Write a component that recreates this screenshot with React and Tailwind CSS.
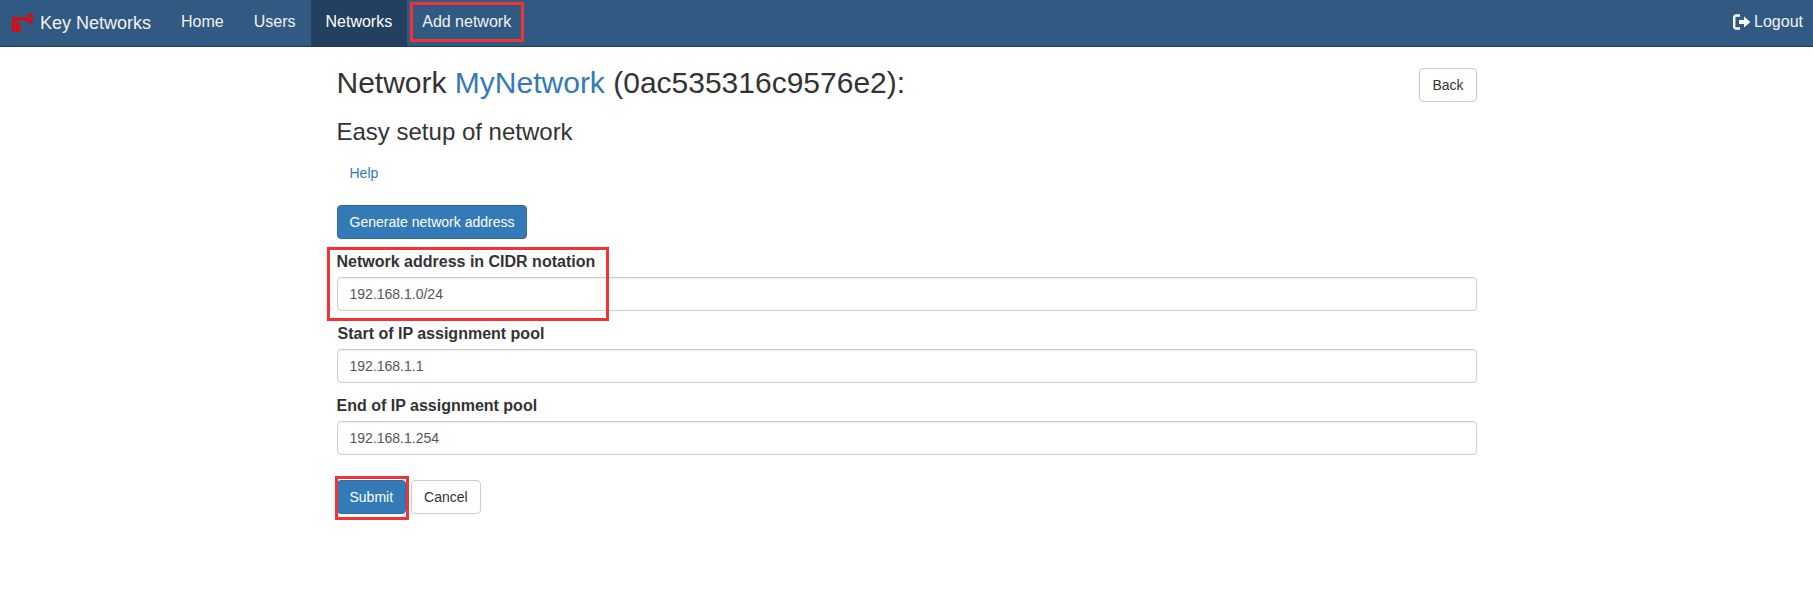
import React from "react";

const navLinks = ["Home", "Users", "Networks", "Add network"];

// Red box drawn on the screenshot to call out a control
function Callout({ className }) {
  return <div className={`absolute border-[3px] border-[#f33333] pointer-events-none ${className}`} />;
}

function KeyLogo() {
  return (
    <svg width="24" height="20" viewBox="0 0 24 20" className="mr-[5px]">
      <path d="M2.5 19V6h14" fill="none" stroke="#f00000" strokeWidth="3" />
      <ellipse cx="19" cy="5.500" rx="2" ry="4" fill="none" stroke="#f00000" strokeWidth="2" />
      <path d="M6 9v10M6 15.500l3.500-4M7 14.500l3 4.500" fill="none" stroke="#f00000" strokeWidth="2" />
    </svg>
  );
}

function LogoutIcon() {
  return (
    <svg width="18" height="16" viewBox="0 0 18 16" className="mr-[3px]">
      <path d="M7 1.500H3A1.800 1.800 0 0 0 1.200 3.300v9.400A1.800 1.800 0 0 0 3 14.500h4" fill="none" stroke="#fff" strokeWidth="2.400" />
      <path d="M6 6h5V2.600L17.400 8 11 13.400V10H6z" fill="#fff" />
    </svg>
  );
}

function Field({ label, value, labelClass = "" }) {
  return (
    <div className="mb-[13px]">
      <label className={`block mb-[5px] font-bold text-base leading-[20px] ${labelClass}`}>{label}</label>
      <input
        readOnly
        value={value}
        className="block w-full h-[34px] px-3 py-1.5 text-sm text-[#555] bg-white border border-[#ccc] rounded shadow-[inset_0_1px_1px_rgba(0,0,0,0.075)] outline-none"
      />
    </div>
  );
}

export default function App() {
  return (
    <div className="min-h-[602px] bg-white text-sm text-[#333] font-['Liberation_Sans',Arial,sans-serif]">
      <nav className="flex justify-between h-[47px] bg-[#305a82] border-b border-[#1f3d5c] text-[#f2f2f2] text-base">
        <div className="flex">
          <a className="flex items-center pl-[11px] pr-[15px] text-lg">
            <KeyLogo />
            Key Networks
          </a>
          <ul className="flex">
            {navLinks.map((link) => (
              <li
                key={link}
                className={`relative flex items-center px-[15px] pb-[3px] ${link === "Networks" ? "bg-[#234060] text-white" : ""}`}
              >
                {link}
                {link === "Add network" && <Callout className="left-[3px] right-[2px] top-[2px] bottom-[4px]" />}
              </li>
            ))}
          </ul>
        </div>
        <a className="flex items-center pr-[10px] pb-[3px]">
          <LogoutIcon />
          Logout
        </a>
      </nav>

      <div className="w-[1140px] mx-auto">
        <div className="flex justify-between items-start pt-[16px]">
          <h2 className="text-[30px] leading-[40px] text-[#333]">
            Network <span className="text-[#337ab7]">MyNetwork</span> (0ac535316c9576e2):
          </h2>
          <button className="h-[34px] mt-[5px] px-3 bg-white border border-[#ccc] rounded text-sm">Back</button>
        </div>

        <h3 className="text-2xl leading-[26px] mt-[16px]">Easy setup of network</h3>

        <a className="block mt-[18px] pl-[13px] leading-[20px] text-[#337ab7]">Help</a>

        <button className="block h-[34px] mt-[22px] px-3 bg-[#337ab7] border border-[#2e6da4] rounded text-white text-sm">
          Generate network address
        </button>

        <div className="relative mt-[13px]">
          <Callout className="left-[-10px] top-[-5px] w-[282px] h-[74px]" />
          <Field label="Network address in CIDR notation" value="192.168.1.0/24" />
        </div>
        <Field label="Start of IP assignment pool" value="192.168.1.1" labelClass="pl-px" />
        <Field label="End of IP assignment pool" value="192.168.1.254" />

        <div className="flex gap-[5px] mt-[25px]">
          <div className="relative">
            <Callout className="left-[-2px] right-[-3px] top-[-4px] bottom-[-6px]" />
            <button className="block h-[34px] px-3 bg-[#337ab7] border border-[#2e6da4] rounded text-white text-sm">Submit</button>
          </div>
          <button className="h-[34px] px-3 bg-white border border-[#ccc] rounded text-sm">Cancel</button>
        </div>
      </div>
    </div>
  );
}
